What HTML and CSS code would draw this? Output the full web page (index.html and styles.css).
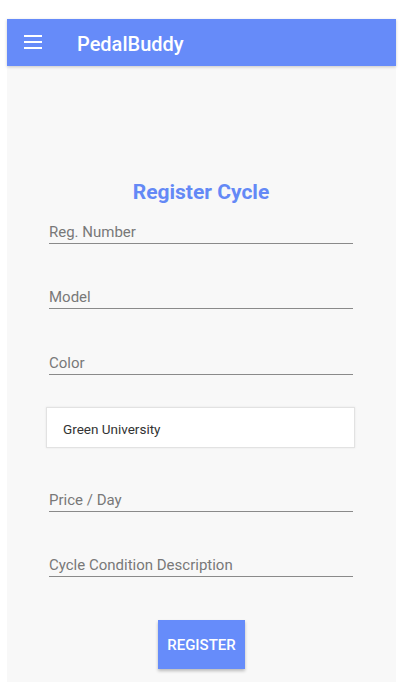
FILE: index.html
```html
<!DOCTYPE html>
<html>
<head>
<meta charset="utf-8">
<link rel="stylesheet" href="styles.css">
</head>
<body>
<div class="screen">
  <header class="appbar">
    <svg class="menu" width="18" height="14" viewBox="0 0 18 14">
      <rect x="0" y="0" width="18" height="2" fill="#fff"/>
      <rect x="0" y="6" width="18" height="2" fill="#fff"/>
      <rect x="0" y="12" width="18" height="2" fill="#fff"/>
    </svg>
    <span class="brand">PedalBuddy</span>
  </header>
  <main class="content">
    <h1 class="title">Register Cycle</h1>
    <div class="field"><span class="label">Reg. Number</span></div>
    <div class="field"><span class="label">Model</span></div>
    <div class="field"><span class="label">Color</span></div>
    <div class="card">Green University</div>
    <div class="field"><span class="label">Price / Day</span></div>
    <div class="field"><span class="label">Cycle Condition Description</span></div>
    <div class="actions"><button class="btn">REGISTER</button></div>
  </main>
</div>
</body>
</html>
```

FILE: styles.css
```css
* { box-sizing: border-box; }
html, body { margin: 0; padding: 0; background: #ffffff; }
body { font-family: Roboto, "Noto Sans", sans-serif; }
.screen {
  margin: 19px 0 0 7px;
  width: 389px;
  height: 663px;
  background: #f8f8f8;
  display: flex;
  flex-direction: column;
}
.appbar {
  height: 47px;
  background: #668bf9;
  display: flex;
  align-items: center;
  padding-left: 17px;
  box-shadow: 0 1px 3px rgba(0,0,0,0.2);
  position: relative;
  z-index: 1;
}
.menu { display: block; margin-top: -1px; }
.brand {
  color: #ffffff;
  font-size: 20px;
  font-weight: 500;
  margin-left: 35px;
  line-height: 24px;
  margin-top: 2px;
}
.content {
  padding: 114px 43px 0 42px;
  display: flex;
  flex-direction: column;
}
.title {
  margin: 0;
  text-align: center;
  color: #6489f6;
  font-size: 21px;
  font-weight: 700;
  line-height: 24px;
}
.field {
  height: 23px;
  border-bottom: 1px solid #8a8a8a;
  padding-top: 1px;
  margin-top: 42px;
}
.title + .field { margin-top: 17px; }
.field:nth-of-type(3) { margin-top: 43px; }
.label {
  display: block;
  font-size: 15px;
  line-height: 20px;
  color: #787878;
}
.card {
  margin: 32px -2px 0 -3px;
  height: 41px;
  background: #ffffff;
  border: 1px solid #e2e2e2;
  box-shadow: 0 0 2px rgba(0,0,0,0.08);
  font-size: 13.5px;
  color: #333333;
  display: flex;
  align-items: center;
  padding-left: 16px;
  padding-top: 2px;
}
.card + .field { margin-top: 41px; }
.actions {
  display: flex;
  justify-content: center;
  margin-top: 43px;
}
.btn {
  width: 87px;
  height: 49px;
  border: none;
  background: #668cfa;
  color: #ffffff;
  font-family: Roboto, "Noto Sans", sans-serif;
  font-size: 15px;
  font-weight: 500;
  padding: 0;
  box-shadow: 0 2px 3px rgba(0,0,0,0.25);
  margin-left: 1px;
}
```
